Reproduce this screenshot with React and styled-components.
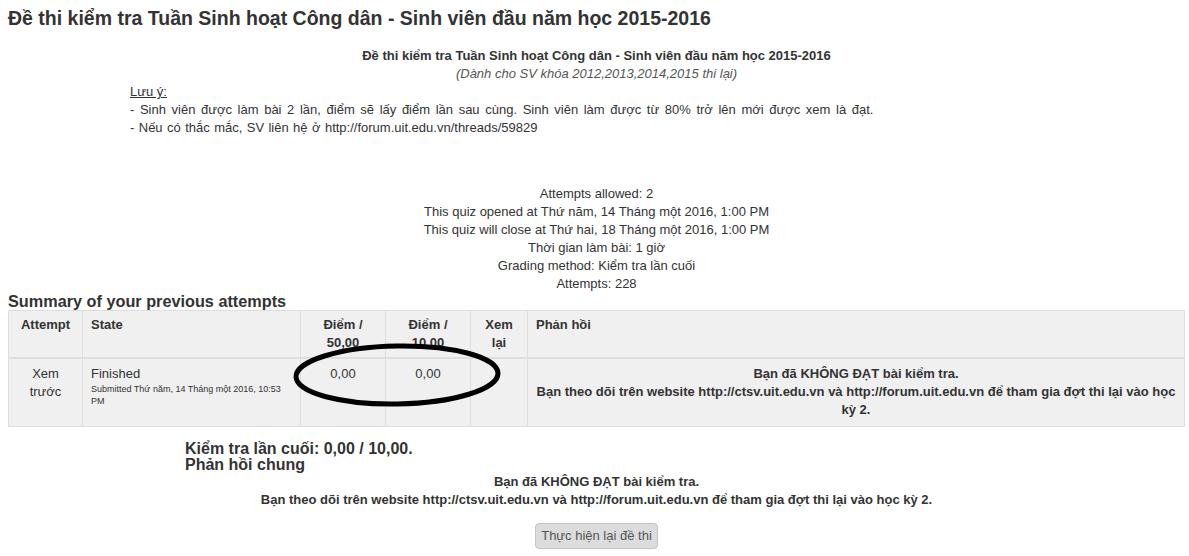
import React from "react";
import styled, { createGlobalStyle } from "styled-components";

const Global = createGlobalStyle`
  html, body { margin: 0; padding: 0; background: #fff; }
  body {
    font-family: "Liberation Sans", Arial, sans-serif;
    font-size: 13px;
    line-height: 18px;
    color: #333;
  }
`;

const Page = styled.div`
  padding: 0 4px 0 8px;
  position: relative;
`;

const Title = styled.h2`
  margin: 0;
  padding-top: 7px;
  font-size: 19.5px;
  line-height: 22px;
  font-weight: bold;
  color: #333;
`;

const Intro = styled.div`
  margin-top: 18px;
`;

const CenterLine = styled.div`
  text-align: center;
  font-weight: ${(p) => (p.$bold ? "bold" : "normal")};
  font-style: ${(p) => (p.$italic ? "italic" : "normal")};
  color: ${(p) => (p.$muted ? "#555" : "#333")};
`;

const Notes = styled.div`
  margin-left: 122px;
`;

const NoteLabel = styled.div`
  text-decoration: underline;
`;

const NoteLine = styled.div`
  word-spacing: ${(p) => p.$spacing || "0"};
`;

const Info = styled.div`
  margin-top: 48px;
  text-align: center;
`;

const SectionHeading = styled.h3`
  margin: 0;
  font-size: 16.25px;
  line-height: 17px;
  font-weight: bold;
  color: #333;
`;

const TableWrap = styled.div`
  position: relative;
`;

const Table = styled.table`
  width: 100%;
  border-collapse: collapse;
  table-layout: fixed;
  background: #f0f0f0;
  border: 1px solid #dedede;
`;

const Th = styled.th`
  box-sizing: border-box;
  padding: 5px 8px;
  font-weight: bold;
  vertical-align: top;
  text-align: ${(p) => p.$align || "center"};
  border-left: 1px solid #dedede;
  border-bottom: 2px solid #dedede;
  width: ${(p) => p.$w || "auto"};
`;

const Td = styled.td`
  padding: 6px 8px 7px;
  vertical-align: top;
  text-align: ${(p) => p.$align || "center"};
  font-weight: ${(p) => (p.$bold ? "bold" : "normal")};
  border-left: 1px solid #dedede;
`;

const Small = styled.div`
  font-size: 9px;
  line-height: 12px;
`;

const Ellipse = styled.svg`
  position: absolute;
  left: 0;
  top: 0;
  width: 100%;
  height: 100%;
  pointer-events: none;
  overflow: visible;
`;

const Results = styled.div`
  margin-top: 14px;
`;

const ResultHead = styled.div`
  margin-left: 177px;
  font-size: 16px;
  line-height: 16px;
  font-weight: bold;
  color: #333;
`;

const Feedback = styled.div`
  text-align: center;
  font-weight: bold;
  line-height: 17.5px;
`;

const ButtonRow = styled.div`
  display: flex;
  justify-content: center;
  margin-top: 15px;
`;

const Button = styled.button`
  font-family: "Liberation Sans", Arial, sans-serif;
  font-size: 13px;
  line-height: 16px;
  color: #555;
  background: #dcdcdc;
  border: 1px solid #c4c4c4;
  border-radius: 4px;
  padding: 4px 5px;
  height: 26px;
`;

export default function App() {
  return (
    <>
      <Global />
      <Page>
        <Title>Đề thi kiểm tra Tuần Sinh hoạt Công dân - Sinh viên đầu năm học 2015-2016</Title>
        <Intro>
          <CenterLine $bold>Đề thi kiểm tra Tuần Sinh hoạt Công dân - Sinh viên đầu năm học 2015-2016</CenterLine>
          <CenterLine $italic $muted>(Dành cho SV khóa 2012,2013,2014,2015 thi lại)</CenterLine>
          <Notes>
            <NoteLabel>Lưu ý:</NoteLabel>
            <NoteLine $spacing="2px">- Sinh viên được làm bài 2 lần, điểm sẽ lấy điểm lần sau cùng. Sinh viên làm được từ 80% trở lên mới được xem là đạt.</NoteLine>
            <NoteLine $spacing="0.8px">- Nếu có thắc mắc, SV liên hệ ở http://forum.uit.edu.vn/threads/59829</NoteLine>
          </Notes>
        </Intro>
        <Info>
          <div>Attempts allowed: 2</div>
          <div>This quiz opened at Thứ năm, 14 Tháng một 2016, 1:00 PM</div>
          <div>This quiz will close at Thứ hai, 18 Tháng một 2016, 1:00 PM</div>
          <div>Thời gian làm bài: 1 giờ</div>
          <div>Grading method: Kiểm tra lần cuối</div>
          <div>Attempts: 228</div>
        </Info>
        <SectionHeading>Summary of your previous attempts</SectionHeading>
        <TableWrap>
          <Table>
            <thead>
              <tr>
                <Th $w="74px">Attempt</Th>
                <Th $w="218px" $align="left">State</Th>
                <Th $w="85px">Điểm / 50,00</Th>
                <Th $w="85px">Điểm / 10,00</Th>
                <Th $w="57px">Xem lại</Th>
                <Th $align="left">Phản hồi</Th>
              </tr>
            </thead>
            <tbody>
              <tr>
                <Td>Xem trước</Td>
                <Td $align="left">
                  Finished
                  <Small>Submitted Thứ năm, 14 Tháng một 2016, 10:53 PM</Small>
                </Td>
                <Td>0,00</Td>
                <Td>0,00</Td>
                <Td></Td>
                <Td $bold>
                  Bạn đã KHÔNG ĐẠT bài kiểm tra.
                  <br />
                  Bạn theo dõi trên website http://ctsv.uit.edu.vn và http://forum.uit.edu.vn để tham gia đợt thi lại vào học kỳ 2.
                </Td>
              </tr>
            </tbody>
          </Table>
          <Ellipse>
            <ellipse cx="389" cy="65" rx="101" ry="29" fill="none" stroke="#000" strokeWidth="5" transform="rotate(-1 389 65)" />
          </Ellipse>
        </TableWrap>
        <Results>
          <ResultHead>Kiểm tra lần cuối: 0,00 / 10,00.</ResultHead>
          <ResultHead>Phản hồi chung</ResultHead>
          <Feedback>
            <div>Bạn đã KHÔNG ĐẠT bài kiểm tra.</div>
            <div>Bạn theo dõi trên website http://ctsv.uit.edu.vn và http://forum.uit.edu.vn để tham gia đợt thi lại vào học kỳ 2.</div>
          </Feedback>
          <ButtonRow>
            <Button>Thực hiện lại đề thi</Button>
          </ButtonRow>
        </Results>
      </Page>
    </>
  );
}
